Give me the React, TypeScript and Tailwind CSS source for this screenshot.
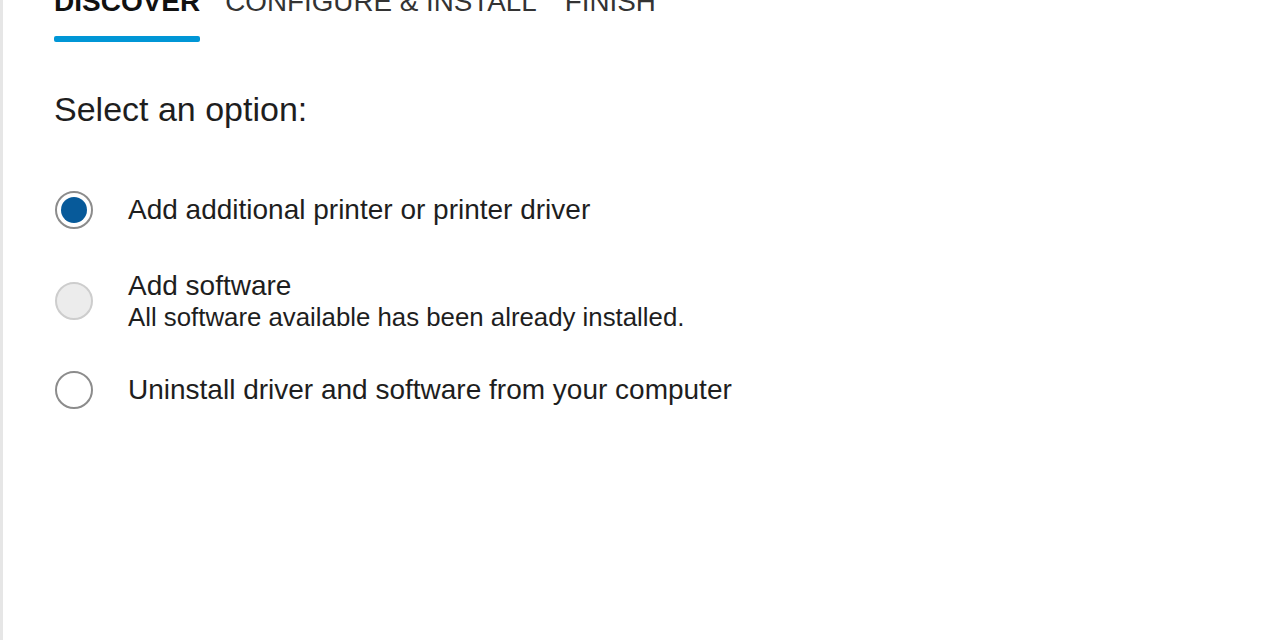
export default function App() {
  const tabs = [
    { label: "DISCOVER", active: true, extra: "" },
    { label: "CONFIGURE & INSTALL", active: false, extra: "" },
    { label: "FINISH", active: false, extra: "ml-[3px]" },
  ]

  return (
    <div
      className="h-[640px] w-[1280px] overflow-hidden bg-white flex"
      style={{ fontFamily: '"Liberation Sans", Arial, sans-serif' }}
    >
      <div className="w-[3px] h-full bg-[#e6e6e6] shrink-0" />

      <div className="flex flex-col pl-[51px] text-[#1e1e1e]">
        {/* stepper tabs */}
        <div className="flex gap-[25px] mt-[-12px]">
          {tabs.map((t) => (
            <div key={t.label} className={"flex flex-col " + t.extra}>
              <span
                className={
                  t.active
                    ? "text-[28px] leading-[28px] font-bold text-[#111]"
                    : "text-[27.8px] leading-[28px] text-[#333]"
                }
              >
                {t.label}
              </span>
              <div
                className={
                  t.active
                    ? "mt-[20px] h-[6px] rounded-[2px] bg-[#0096d6]"
                    : "mt-[20px] h-[6px]"
                }
              />
            </div>
          ))}
        </div>

        <div className="mt-[50px] text-[34px] leading-[34px]">Select an option:</div>

        {/* options */}
        <div className="flex flex-col mt-[65px] pl-[1px]">
          <div className="flex items-center gap-[35px]">
            <div className="w-[38px] h-[38px] rounded-full border-2 border-[#8c8c8c] bg-white flex items-center justify-center shrink-0">
              <div className="w-[26px] h-[26px] rounded-full bg-[#075a9a]" />
            </div>
            <span className="text-[28px] leading-[32px]">Add additional printer or printer driver</span>
          </div>

          <div className="flex items-center gap-[35px] mt-[41px]">
            <div className="w-[38px] h-[38px] rounded-full border-2 border-[#cdcdcd] bg-[#ececec] shrink-0" />
            <div className="flex flex-col">
              <span className="text-[28px] leading-[32px]">Add software</span>
              <span className="text-[25.8px] leading-[30px]">All software available has been already installed.</span>
            </div>
          </div>

          <div className="flex items-center gap-[35px] mt-[39px]">
            <div className="w-[38px] h-[38px] rounded-full border-2 border-[#8c8c8c] bg-white shrink-0" />
            <span className="text-[28px] leading-[32px]">Uninstall driver and software from your computer</span>
          </div>
        </div>
      </div>
    </div>
  )
}
